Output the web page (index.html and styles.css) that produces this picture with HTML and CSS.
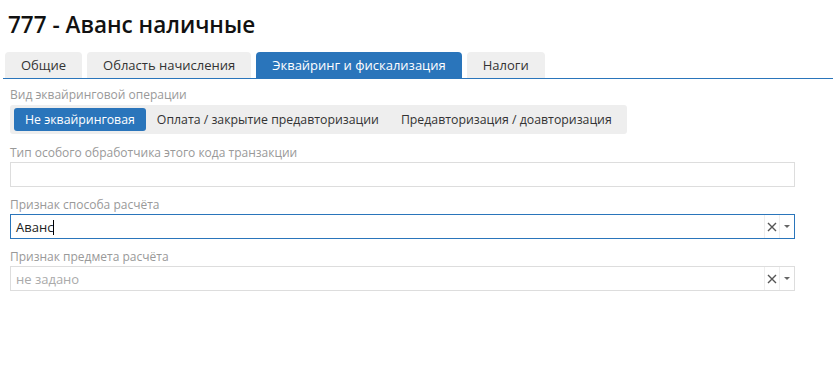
FILE: index.html
```html
<!DOCTYPE html>
<html lang="ru">
<head>
    <meta charset="UTF-8">
    <title>777 - Аванс наличные</title>
    <link rel="stylesheet" href="styles.css">
</head>
<body>
    <h1 class="title">777 - Аванс наличные</h1>

    <div class="tabs">
        <div class="tab">Общие</div>
        <div class="tab">Область начисления</div>
        <div class="tab active">Эквайринг и фискализация</div>
        <div class="tab">Налоги</div>
    </div>

    <div class="form">
        <div class="field">
            <div class="label">Вид эквайринговой операции</div>
            <div class="segments">
                <span class="segment active">Не эквайринговая</span>
                <span class="segment">Оплата / закрытие предавторизации</span>
                <span class="segment">Предавторизация / доавторизация</span>
            </div>
        </div>

        <div class="field">
            <div class="label">Тип особого обработчика этого кода транзакции</div>
            <div class="input"></div>
        </div>

        <div class="field">
            <div class="label">Признак способа расчёта</div>
            <div class="input select focused">
                <span class="value">Аванс<span class="caret"></span></span>
                <span class="clear">
                    <svg width="10" height="10" viewBox="0 0 10 10"><path d="M1 1L9 9M9 1L1 9" stroke="#555" stroke-width="1.4"/></svg>
                </span>
                <span class="arrow"></span>
            </div>
        </div>

        <div class="field">
            <div class="label">Признак предмета расчёта</div>
            <div class="input select">
                <span class="value placeholder">не задано</span>
                <span class="clear">
                    <svg width="10" height="10" viewBox="0 0 10 10"><path d="M1 1L9 9M9 1L1 9" stroke="#555" stroke-width="1.4"/></svg>
                </span>
                <span class="arrow"></span>
            </div>
        </div>
    </div>
</body>
</html>
```

FILE: styles.css
```css
body {
    font-family: "Open Sans", Arial, sans-serif;
    margin: 0;
    background-color: white;
    color: #333;
}
.title {
    margin: 0;
    padding: 10px 8px 0 8px;
    height: 42px;
    box-sizing: border-box;
    font-size: 22.5px;
    font-weight: 600;
    color: #111;
    line-height: 30px;
}
.tabs {
    display: flex;
    gap: 5px;
    margin: 10px 0 0 3px;
    padding-left: 2px;
    border-bottom: 1px solid #2a75bb;
}
.tab {
    height: 26px;
    line-height: 26px;
    padding: 0 16px;
    font-size: 13px;
    background-color: #efefef;
    border-radius: 4px 4px 0 0;
    color: #333;
}
.tab.active {
    background-color: #2a75bb;
    color: white;
}
.form {
    padding: 0 38px 0 10px;
}
.field {
    margin-top: 9px;
}
.field:first-child {
    margin-top: 7px;
}
.label {
    font-size: 12px;
    color: #999;
    height: 18px;
    line-height: 18px;
}
.segments {
    display: inline-flex;
    background-color: #eee;
    border-radius: 3px;
    padding: 3px 4px;
    margin: 1px 0;
}
.segment {
    font-size: 12.3px;
    padding: 0 11px;
    height: 23px;
    line-height: 23px;
    border-radius: 3px;
    color: #333;
}
.segment.active {
    background-color: #2a75bb;
    color: white;
}
.input {
    height: 25px;
    border: 1px solid #ddd;
    box-sizing: border-box;
    display: flex;
    align-items: center;
    font-size: 13px;
}
.input.focused {
    border-color: #2a75bb;
}
.value {
    flex: 1;
    padding-left: 5px;
    color: #222;
}
.value.placeholder {
    color: #aaa;
}
.caret {
    display: inline-block;
    width: 1px;
    height: 15px;
    background-color: #000;
    vertical-align: -3px;
}
.clear {
    width: 14px;
    height: 100%;
    display: flex;
    align-items: center;
    justify-content: center;
    border-left: 1px solid #eee;
    border-right: 1px solid #eee;
}
.arrow {
    width: 14px;
    height: 100%;
    position: relative;
}
.arrow::after {
    content: "";
    position: absolute;
    left: 4px;
    top: 10px;
    border-left: 3px solid transparent;
    border-right: 3px solid transparent;
    border-top: 3px solid #666;
}
```
